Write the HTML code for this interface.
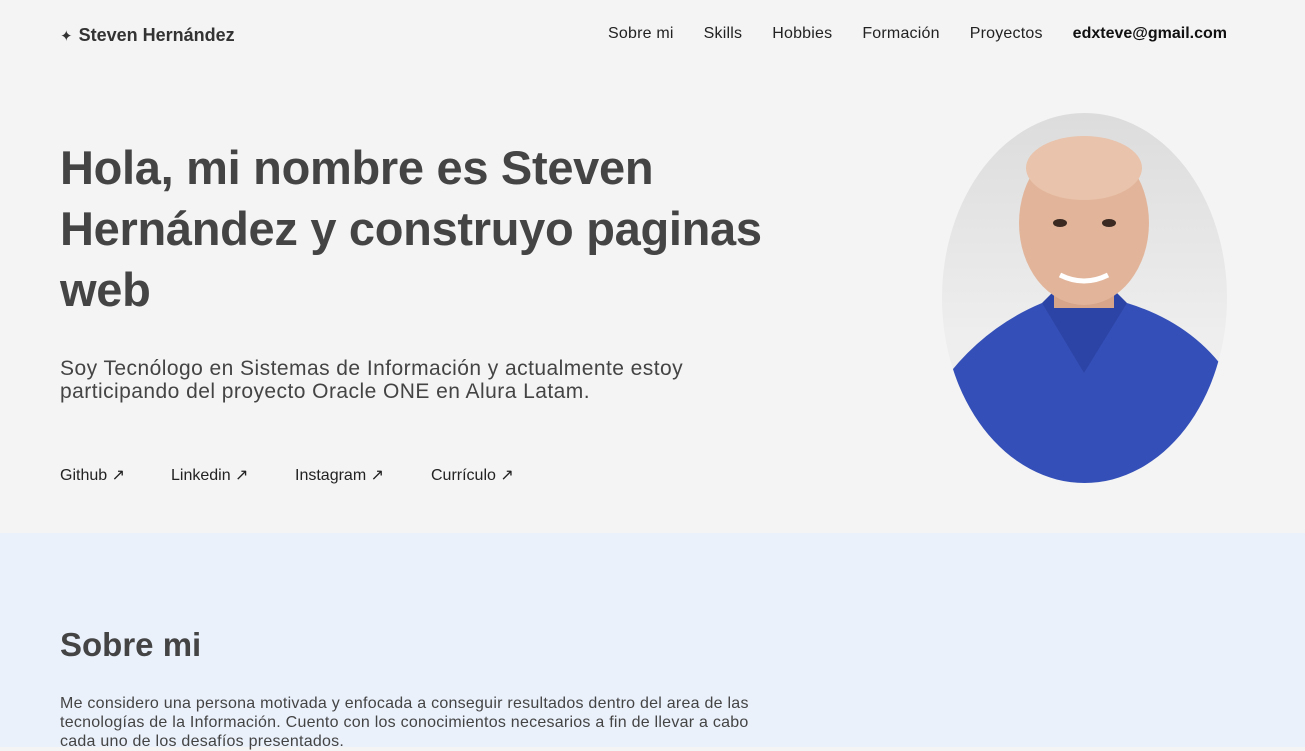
<!DOCTYPE html>
<html><head><meta charset="utf-8"><style>
*{margin:0;padding:0;box-sizing:border-box}
body{width:1305px;height:747px;overflow:hidden;background:#f4f4f4;font-family:"Liberation Sans",sans-serif;color:#444}
.nav{position:absolute;top:0;left:0;right:0;height:70px}
.logo{position:absolute;left:60px;top:25px;font-size:18px;font-weight:bold;color:#333}
.logo span{font-size:15px;margin-right:6px;font-weight:normal}
.menu{position:absolute;right:78px;top:25px;font-size:16px;color:#222}
.menu a{margin-left:30px;color:#222;text-decoration:none;letter-spacing:0.2px}
.menu a.b{font-weight:bold;color:#111;letter-spacing:0}
h1{position:absolute;left:60px;top:137px;width:760px;font-size:47px;line-height:61px;font-weight:bold;color:#444;letter-spacing:-0.3px}
.sub{position:absolute;left:60px;top:357px;width:720px;font-size:21px;line-height:23px;color:#444;letter-spacing:0.45px}
.links{position:absolute;left:60px;top:465px;font-size:16px;color:#222}
.links a{color:#222;text-decoration:none;position:absolute;white-space:nowrap}
.photo{position:absolute;left:942px;top:113px;width:285px;height:370px;border-radius:50%;overflow:hidden;background:linear-gradient(#dcdcdc,#eee 60%)}
.sec{position:absolute;left:0;top:533px;width:1305px;height:214px;background:#eaf1fb}
h2{position:absolute;left:60px;top:626px;font-size:33px;font-weight:bold;color:#444}
.p{position:absolute;left:60px;top:694px;width:705px;font-size:16px;line-height:19px;color:#444;letter-spacing:0.25px}
</style></head><body>
<div class="nav"><div class="logo"><span>✦</span>Steven Hernández</div>
<div class="menu"><a>Sobre mi</a><a>Skills</a><a>Hobbies</a><a>Formación</a><a>Proyectos</a><a class="b">edxteve@gmail.com</a></div></div>
<h1>Hola, mi nombre es Steven Hernández y construyo paginas web</h1>
<div class="sub">Soy Tecnólogo en Sistemas de Información y actualmente estoy participando del proyecto Oracle ONE en Alura Latam.</div>
<div class="links"><a style="left:0">Github ↗</a><a style="left:111px">Linkedin ↗</a><a style="left:235px">Instagram ↗</a><a style="left:371px">Currículo ↗</a></div>
<div class="photo"><svg width="285" height="370" viewBox="0 0 285 370">
<path d="M0 270 Q40 215 100 190 L140 215 L185 190 Q250 210 285 260 L285 370 L0 370Z" fill="#3450b8"/>
<path d="M100 190 L142 260 L185 190 L170 175 L115 175Z" fill="#2c44a6"/>
<rect x="112" y="150" width="60" height="45" fill="#d6a58a"/>
<ellipse cx="142" cy="110" rx="65" ry="82" fill="#e2b59b"/>
<ellipse cx="142" cy="55" rx="58" ry="32" fill="#e9c3ab"/>
<path d="M118 162 Q142 174 166 162" stroke="#fff" stroke-width="5" fill="none"/>
<ellipse cx="118" cy="110" rx="7" ry="4" fill="#3a2a22"/><ellipse cx="167" cy="110" rx="7" ry="4" fill="#3a2a22"/>
</svg></div>
<div class="sec"></div>
<h2>Sobre mi</h2>
<div class="p">Me considero una persona motivada y enfocada a conseguir resultados dentro del area de las tecnologías de la Información. Cuento con los conocimientos necesarios a fin de llevar a cabo cada uno de los desafíos presentados.</div>
</body></html>
